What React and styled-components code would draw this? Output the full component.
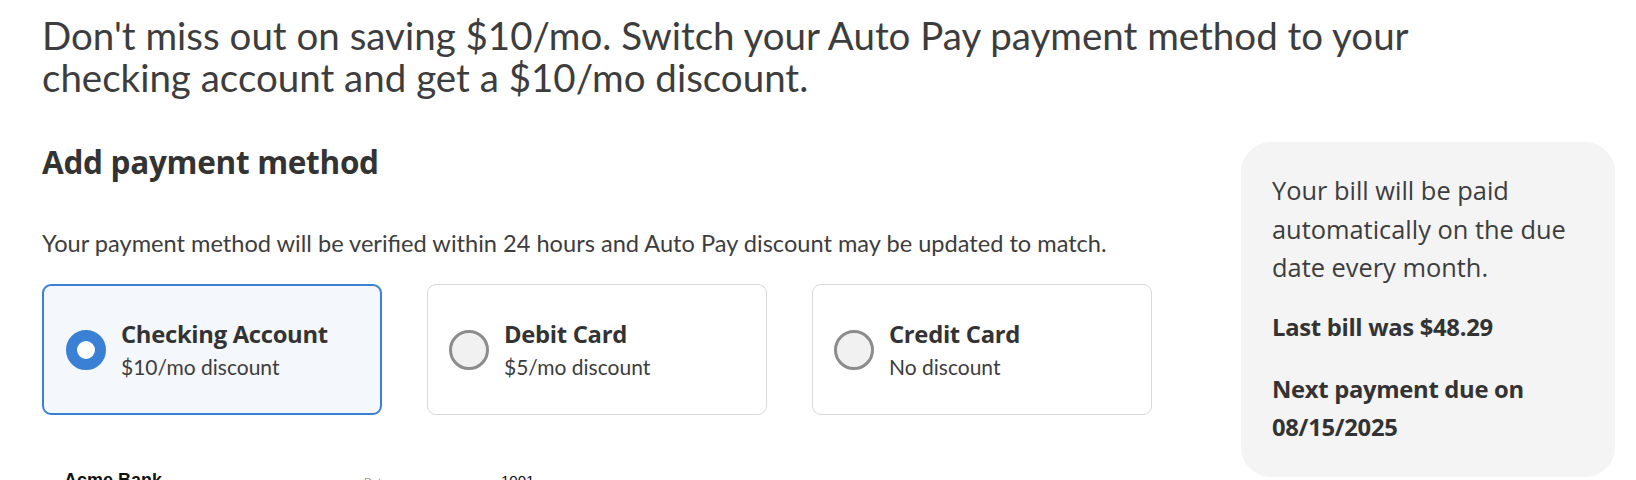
import React, { useState } from 'react';
import styled, { createGlobalStyle } from 'styled-components';

const GlobalStyle = createGlobalStyle`
    html, body {
        margin: 0;
        padding: 0;
        background: #fff;
        font-family: Lato, "Open Sans", sans-serif;
        color: #3d3d3d;
    }
`;

const Page = styled.div`
    padding: 14px 22px 0 42px;
    height: 480px;
    overflow: hidden;
    box-sizing: border-box;
`;

const Headline = styled.h1`
    margin: 0;
    max-width: 1420px;
    font-size: 38.5px;
    line-height: 42px;
    font-weight: 400;
    color: #3d3d3d;
`;

const Layout = styled.div`
    display: flex;
    align-items: flex-start;
    gap: 90px;
    margin-top: 46px;
`;

const Main = styled.div`
    width: 1109px;
    flex-shrink: 0;
`;

const Heading = styled.h2`
    margin: 0;
    font-family: "Open Sans", Lato, sans-serif;
    font-size: 31.5px;
    line-height: 36px;
    font-weight: 700;
    letter-spacing: -0.3px;
    color: #333;
`;

const Note = styled.p`
    margin: 49px 0 0;
    font-size: 23.6px;
    line-height: 28px;
    color: #3d3d3d;
`;

const Options = styled.div`
    display: grid;
    grid-template-columns: repeat(3, 340px);
    gap: 45px;
    margin-top: 27px;
`;

const Option = styled.label`
    display: flex;
    align-items: center;
    gap: 15px;
    height: 131px;
    box-sizing: border-box;
    padding: 0 ${({ $active }) => ($active ? 22 : 21)}px;
    border: ${({ $active }) => ($active ? '2px solid #3a80d5' : '1px solid #d9d9d9')};
    border-radius: 9px;
    background: ${({ $active }) => ($active ? '#f4f7fc' : '#fff')};
    cursor: pointer;
`;

const Radio = styled.span`
    width: 40px;
    height: 40px;
    flex-shrink: 0;
    border-radius: 50%;
    box-sizing: border-box;
    border: ${({ $active }) => ($active ? '11px solid #3a80d5' : '3px solid #8c8c8c')};
    background: ${({ $active }) => ($active ? '#fff' : '#f1f1f1')};
`;

const OptionText = styled.div`
    display: flex;
    flex-direction: column;
    gap: 6px;
`;

const OptionTitle = styled.span`
    font-family: "Open Sans", Lato, sans-serif;
    font-size: 23.8px;
    line-height: 28px;
    font-weight: 700;
    letter-spacing: -0.3px;
    color: #333;
`;

const OptionSub = styled.span`
    font-size: 21px;
    line-height: 26px;
    color: #3d3d3d;
`;

const CheckPreview = styled.div`
    display: flex;
    align-items: baseline;
    margin-top: 55px;
    padding-left: 22px;
    font-family: "Liberation Sans", Arial, sans-serif;
    color: #111;
`;

const Bank = styled.span`
    width: 300px;
    font-size: 18px;
    font-weight: 700;
`;

const CheckMeta = styled.span`
    width: ${({ $w }) => $w}px;
    font-size: ${({ $size }) => $size}px;
    color: ${({ $muted }) => ($muted ? '#999' : '#111')};
`;

const Panel = styled.aside`
    width: 374px;
    flex-shrink: 0;
    margin-top: -2px;
    box-sizing: border-box;
    padding: 29px 30px 31px 31px;
    background: #f4f4f4;
    border-radius: 30px;
`;

const PanelText = styled.p`
    margin: 0;
    font-family: "Open Sans", Lato, sans-serif;
    font-size: 25.4px;
    line-height: 38.5px;
    color: #3d3d3d;
    & + & {
        margin-top: 21px;
    }
    & + & + & {
        margin-top: 24px;
    }
`;

const PanelStrong = styled(PanelText)`
    font-size: 23.8px;
    font-weight: 700;
    line-height: 38px;
    letter-spacing: -0.3px;
    color: #333;
`;

const methods = [
    { id: 'checking', title: 'Checking Account', sub: '$10/mo discount' },
    { id: 'debit', title: 'Debit Card', sub: '$5/mo discount' },
    { id: 'credit', title: 'Credit Card', sub: 'No discount' },
];

const App = () => {
    const [selected, setSelected] = useState('checking');

    return (
        <Page>
            <GlobalStyle />
            <Headline>
                Don't miss out on saving $10/mo. Switch your Auto Pay payment method to your
                checking account and get a $10/mo discount.
            </Headline>
            <Layout>
                <Main>
                    <Heading>Add payment method</Heading>
                    <Note>
                        Your payment method will be verified within 24 hours and Auto Pay discount may be updated to match.
                    </Note>
                    <Options>
                        {methods.map(m => {
                            const active = m.id === selected;
                            return (
                                <Option key={m.id} $active={active} onClick={() => setSelected(m.id)}>
                                    <Radio $active={active} />
                                    <OptionText>
                                        <OptionTitle>{m.title}</OptionTitle>
                                        <OptionSub>{m.sub}</OptionSub>
                                    </OptionText>
                                </Option>
                            );
                        })}
                    </Options>
                    <CheckPreview>
                        <Bank>Acme Bank</Bank>
                        <CheckMeta $w={137} $size={11} $muted>Date</CheckMeta>
                        <CheckMeta $w={60} $size={15}>1001</CheckMeta>
                    </CheckPreview>
                </Main>
                <Panel>
                    <PanelText>Your bill will be paid automatically on the due date every month.</PanelText>
                    <PanelStrong>Last bill was $48.29</PanelStrong>
                    <PanelStrong>Next payment due on 08/15/2025</PanelStrong>
                </Panel>
            </Layout>
        </Page>
    );
};

export default App;
